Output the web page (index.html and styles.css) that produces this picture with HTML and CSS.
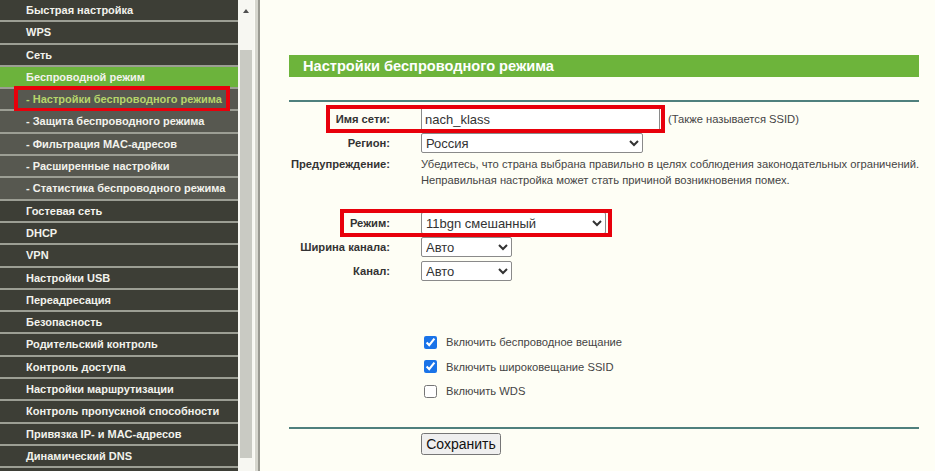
FILE: index.html
```html
<!DOCTYPE html>
<html lang="ru">
<head>
    <meta charset="UTF-8">
    <meta name="viewport" content="width=device-width, initial-scale=1.0">
    <title>Настройки беспроводного режима</title>
    <link rel="stylesheet" href="styles.css">
</head>
<body>
    <div class="page">
        <aside class="sidebar">
            <ul class="menu">
                <li class="item">Быстрая настройка</li>
                <li class="item">WPS</li>
                <li class="item">Сеть</li>
                <li class="item active">Беспроводной режим</li>
                <li class="item sub current">- Настройки беспроводного режима<span class="mark"></span></li>
                <li class="item sub">- Защита беспроводного режима</li>
                <li class="item sub">- Фильтрация MAC-адресов</li>
                <li class="item sub">- Расширенные настройки</li>
                <li class="item sub">- Статистика беспроводного режима</li>
                <li class="item">Гостевая сеть</li>
                <li class="item">DHCP</li>
                <li class="item">VPN</li>
                <li class="item">Настройки USB</li>
                <li class="item">Переадресация</li>
                <li class="item">Безопасность</li>
                <li class="item">Родительский контроль</li>
                <li class="item">Контроль доступа</li>
                <li class="item">Настройки маршрутизации</li>
                <li class="item">Контроль пропускной способности</li>
                <li class="item">Привязка IP- и MAC-адресов</li>
                <li class="item">Динамический DNS</li>
            </ul>
            <div class="scrollbar">
                <span class="arrow"></span>
                <div class="thumb"></div>
            </div>
        </aside>
        <div class="frame-edge"></div>

        <main class="content">
            <h2 class="title">Настройки беспроводного режима</h2>
            <div class="rule"></div>

            <div class="form">
                <div class="row">
                    <label class="label">Имя сети:</label>
                    <input class="field ssid" type="text" value="nach_klass">
                    <span class="hint">(Также называется SSID)</span>
                    <span class="mark mark-ssid"></span>
                </div>
                <div class="row">
                    <label class="label">Регион:</label>
                    <select class="field region"><option>Россия</option></select>
                </div>
                <div class="row warn">
                    <label class="label">Предупреждение:</label>
                    <p class="note">Убедитесь, что страна выбрана правильно в целях соблюдения законодательных ограничений.<br>Неправильная настройка может стать причиной возникновения помех.</p>
                </div>

                <div class="row mode">
                    <label class="label">Режим:</label>
                    <select class="field mode-select"><option>11bgn смешанный</option></select>
                    <span class="mark mark-mode"></span>
                </div>
                <div class="row">
                    <label class="label">Ширина канала:</label>
                    <select class="field small"><option>Авто</option></select>
                </div>
                <div class="row channel">
                    <label class="label">Канал:</label>
                    <select class="field small"><option>Авто</option></select>
                </div>

                <div class="checks">
                    <label class="check"><input type="checkbox" checked> Включить беспроводное вещание</label>
                    <label class="check"><input type="checkbox" checked> Включить широковещание SSID</label>
                    <label class="check"><input type="checkbox"> Включить WDS</label>
                </div>
            </div>

            <div class="rule"></div>
            <div class="actions">
                <button class="btn">Сохранить</button>
            </div>
        </main>
    </div>
</body>
</html>
```

FILE: styles.css
```css
*{
    margin: 0;
    padding: 0;
    box-sizing: border-box;
}
body{
    width: 935px;
    height: 471px;
    overflow: hidden;
    font-family: "Liberation Sans", Arial, sans-serif;
    background-color: #fefef5;
}
.page{
    display: flex;
    height: 471px;
}

/* left menu */
.sidebar{
    display: flex;
    width: 254px;
    flex-shrink: 0;
    background-color: #f7f7f2;
}
.menu{
    list-style: none;
    width: 238px;
    background-color: #3d3e36;
}
.item{
    position: relative;
    height: 22.3px;
    line-height: 20.3px;
    padding-left: 26px;
    border-bottom: 2px solid #9c9e94;
    color: #f2f2ec;
    font-size: 11px;
    font-weight: bold;
    white-space: nowrap;
}
.item.sub{
    background-color: #575850;
}
.item.active{
    background-color: #6cb33c;
}
.item.current{
    color: #b6d56b;
}
.mark{
    position: absolute;
    border: 4px solid #e8000b;
    pointer-events: none;
}
.item .mark{
    left: 14px;
    right: 8px;
    top: -3px;
    bottom: -3px;
}
.scrollbar{
    display: flex;
    flex-direction: column;
    align-items: center;
    width: 16px;
    padding-top: 9px;
}
.arrow{
    width: 0;
    height: 0;
    border-left: 3.5px solid transparent;
    border-right: 3.5px solid transparent;
    border-bottom: 4px solid #505050;
}
.thumb{
    width: 12px;
    height: 408px;
    margin-top: 37px;
    background-color: #c9cac3;
}
.frame-edge{
    width: 6px;
    flex-shrink: 0;
    background-color: #d6d6ce;
    border-left: 1px solid #fbfbf6;
    border-right: 2px solid #9a9a92;
}

/* right content */
.content{
    flex: 1;
    padding: 55px 18px 0 29px;
}
.title{
    height: 22px;
    line-height: 22px;
    padding-left: 14px;
    background-color: #6db43b;
    color: #fff;
    font-size: 14.6px;
    font-weight: bold;
}
.rule{
    height: 2px;
    margin-top: 23px;
    background-color: #4f807d;
}
.form{
    padding-top: 6px;
}
.row{
    position: relative;
    display: flex;
    align-items: center;
    margin-bottom: 3px;
}
.label{
    width: 101px;
    margin-right: 31px;
    flex-shrink: 0;
    text-align: right;
    color: #333;
    font-size: 11.2px;
    font-weight: bold;
    white-space: nowrap;
}
.field{
    height: 21px;
    font-family: "Liberation Sans", Arial, sans-serif;
    font-size: 13px;
    color: #333;
    background-color: #fff;
    border: 1px solid #8a8a8a;
    border-radius: 2px;
}
.ssid{
    width: 239px;
    height: 22px;
    padding-left: 3px;
    border-radius: 0;
}
.region{
    width: 222px;
    height: 20px;
}
.mode-select{
    width: 185px;
    height: 22px;
}
.small{
    width: 91px;
    height: 20px;
}
.hint{
    margin-left: 8px;
    color: #444;
    font-size: 11.2px;
}
.mark-ssid{
    left: 37px;
    width: 339px;
    top: -3px;
    bottom: -3px;
}
.warn{
    align-items: flex-start;
    margin-bottom: 24px;
}
.warn .label{
    line-height: 16px;
}
.note{
    color: #444;
    font-size: 11.2px;
    line-height: 16px;
    white-space: nowrap;
}
.mode .mark-mode{
    left: 51px;
    width: 272px;
    top: -3px;
    bottom: -3px;
}
.channel{
    margin-top: 4px;
}
.checks{
    display: flex;
    flex-direction: column;
    padding: 46px 0 0 132px;
}
.check{
    display: flex;
    align-items: center;
    height: 24.5px;
    color: #444;
    font-size: 11.2px;
}
.check input{
    width: 13px;
    height: 13px;
    margin: 0 9px 0 3px;
    accent-color: #1a73e8;
}
.checks + .rule{
    margin-top: 23px;
}
.actions{
    padding: 4px 0 0 132px;
}
.btn{
    width: 80px;
    height: 22px;
    font-family: "Liberation Sans", Arial, sans-serif;
    font-size: 14px;
    color: #111;
}
```
